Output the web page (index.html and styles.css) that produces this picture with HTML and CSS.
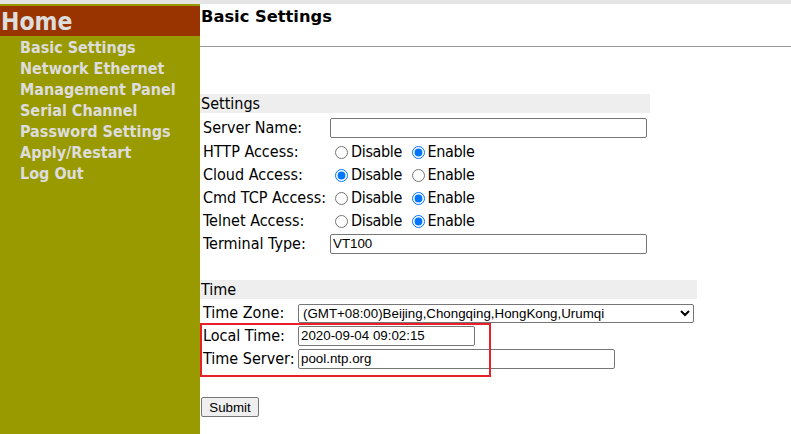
FILE: index.html
```html
<!DOCTYPE html>
<html>
<head>
<meta charset="utf-8">
<link rel="stylesheet" href="styles.css">
</head>
<body>
<div class="topbar"></div>
<div class="page">
  <nav class="sidebar">
    <div class="home">Home</div>
    <ul class="menu">
      <li>Basic Settings</li>
      <li>Network Ethernet</li>
      <li>Management Panel</li>
      <li>Serial Channel</li>
      <li>Password Settings</li>
      <li>Apply/Restart</li>
      <li>Log Out</li>
    </ul>
  </nav>
  <main class="main">
    <h1 class="title">Basic Settings</h1>
    <hr class="rule">
    <section class="block settings">
      <div class="sec-head">Settings</div>
      <div class="form form-settings">
        <div class="lbl">Server Name:</div>
        <div class="val"><input class="txt txt-wide" type="text" value=""></div>
        <div class="lbl">HTTP Access:</div>
        <div class="val"><input class="rad" type="radio" name="http"><span class="opt">Disable</span> <input class="rad" type="radio" name="http" checked><span class="opt">Enable</span></div>
        <div class="lbl">Cloud Access:</div>
        <div class="val"><input class="rad" type="radio" name="cloud" checked><span class="opt">Disable</span> <input class="rad" type="radio" name="cloud"><span class="opt">Enable</span></div>
        <div class="lbl">Cmd TCP Access:</div>
        <div class="val"><input class="rad" type="radio" name="cmd"><span class="opt">Disable</span> <input class="rad" type="radio" name="cmd" checked><span class="opt">Enable</span></div>
        <div class="lbl">Telnet Access:</div>
        <div class="val"><input class="rad" type="radio" name="tel"><span class="opt">Disable</span> <input class="rad" type="radio" name="tel" checked><span class="opt">Enable</span></div>
        <div class="lbl">Terminal Type:</div>
        <div class="val"><input class="txt txt-wide" type="text" value="VT100"></div>
      </div>
    </section>
    <section class="block time">
      <div class="sec-head">Time</div>
      <div class="form form-time">
        <div class="lbl">Time Zone:</div>
        <div class="val"><select class="sel"><option>(GMT+08:00)Beijing,Chongqing,HongKong,Urumqi</option></select></div>
        <div class="lbl">Local Time:</div>
        <div class="val"><input class="txt txt-short" type="text" value="2020-09-04 09:02:15"></div>
        <div class="lbl">Time Server:</div>
        <div class="val"><input class="txt txt-wide" type="text" value="pool.ntp.org"></div>
      </div>
      <div class="highlight"></div>
    </section>
    <button class="submit" type="button">Submit</button>
  </main>
</div>
</body>
</html>
```
FILE: styles.css
```css
html, body {
  margin: 0;
  padding: 0;
  background: #ffffff;
  height: 434px;
  overflow: hidden;
}
body {
  font-family: "DejaVu Sans Condensed", "DejaVu Sans", sans-serif;
  font-stretch: condensed;
  color: #000;
}
.topbar {
  height: 4px;
  background: #e4e4e4;
}
.page {
  display: flex;
  height: 430px;
}
.sidebar {
  width: 200px;
  flex: none;
  background: #999900;
  padding-top: 2px;
}
.home {
  height: 30px;
  background: #993300;
  color: #dddddd;
  font-weight: bold;
  font-size: 24.5px;
  line-height: 31px;
  padding-left: 1px;
}
.menu {
  list-style: none;
  margin: 0;
  padding: 1px 0 0 20px;
  font-weight: bold;
  font-size: 16px;
  line-height: 21px;
  color: #dddddd;
}
.main {
  flex: 1;
  min-width: 0;
}
.title {
  margin: 0;
  padding: 3px 0 0 1px;
  font-family: "DejaVu Sans", sans-serif;
  font-stretch: normal;
  font-size: 16.3px;
  line-height: 20px;
  font-weight: bold;
  height: 20px;
}
.rule {
  margin: 19px 0 0;
  border: 0;
  border-top: 1px solid #999999;
  height: 0;
}
.block {
  position: relative;
}
.settings {
  width: 450px;
  margin-top: 47px;
}
.time {
  width: 497px;
  margin-top: 25px;
}
.sec-head {
  height: 19px;
  line-height: 19px;
  background: #eeeeee;
  font-size: 16px;
  padding-left: 1px;
}
.form {
  display: grid;
  align-items: center;
  font-size: 16px;
}
.form-settings {
  grid-template-columns: 130px 1fr;
  grid-template-rows: 25px 23px 23px 23px 23px 23px;
  margin-top: 2px;
}
.form-time {
  grid-template-columns: 98px 1fr;
  grid-auto-rows: 23px;
  margin-top: 2px;
}
.lbl {
  padding-left: 3px;
  white-space: nowrap;
  line-height: 19px;
}
.val {
  white-space: nowrap;
  line-height: 19px;
  font-size: 16px;
}
.opt {
  letter-spacing: -0.35px;
}
.rad {
  width: 13px;
  height: 13px;
  margin: 0 3px 0 5px;
  vertical-align: -2px;
  accent-color: #0075ff;
}
.txt {
  box-sizing: border-box;
  height: 20px;
  border: 1px solid #767676;
  border-radius: 2px;
  padding: 0 2px;
  font-family: "Liberation Sans", Arial, sans-serif;
  font-size: 13.333px;
  color: #000;
  background: #fff;
  margin: 0;
  vertical-align: middle;
}
.txt-wide {
  width: 317px;
}
.txt-short {
  width: 177px;
}
.sel {
  box-sizing: border-box;
  width: 396px;
  height: 19px;
  border: 1px solid #767676;
  border-radius: 2px;
  font-family: "Liberation Sans", Arial, sans-serif;
  font-size: 13.333px;
  background: #fff;
  color: #000;
  margin: 0;
  padding: 0;
  vertical-align: middle;
}
.highlight {
  position: absolute;
  left: 0;
  top: 43px;
  width: 287px;
  height: 50px;
  border: 2px solid #e8202a;
  pointer-events: none;
}
.submit {
  display: block;
  margin: 27px 0 0 1px;
  box-sizing: border-box;
  width: 58px;
  height: 20px;
  padding: 0;
  border: 1px solid #767676;
  border-radius: 2px;
  background: #efefef;
  font-family: "Liberation Sans", Arial, sans-serif;
  font-size: 13.333px;
  color: #000;
}
```
